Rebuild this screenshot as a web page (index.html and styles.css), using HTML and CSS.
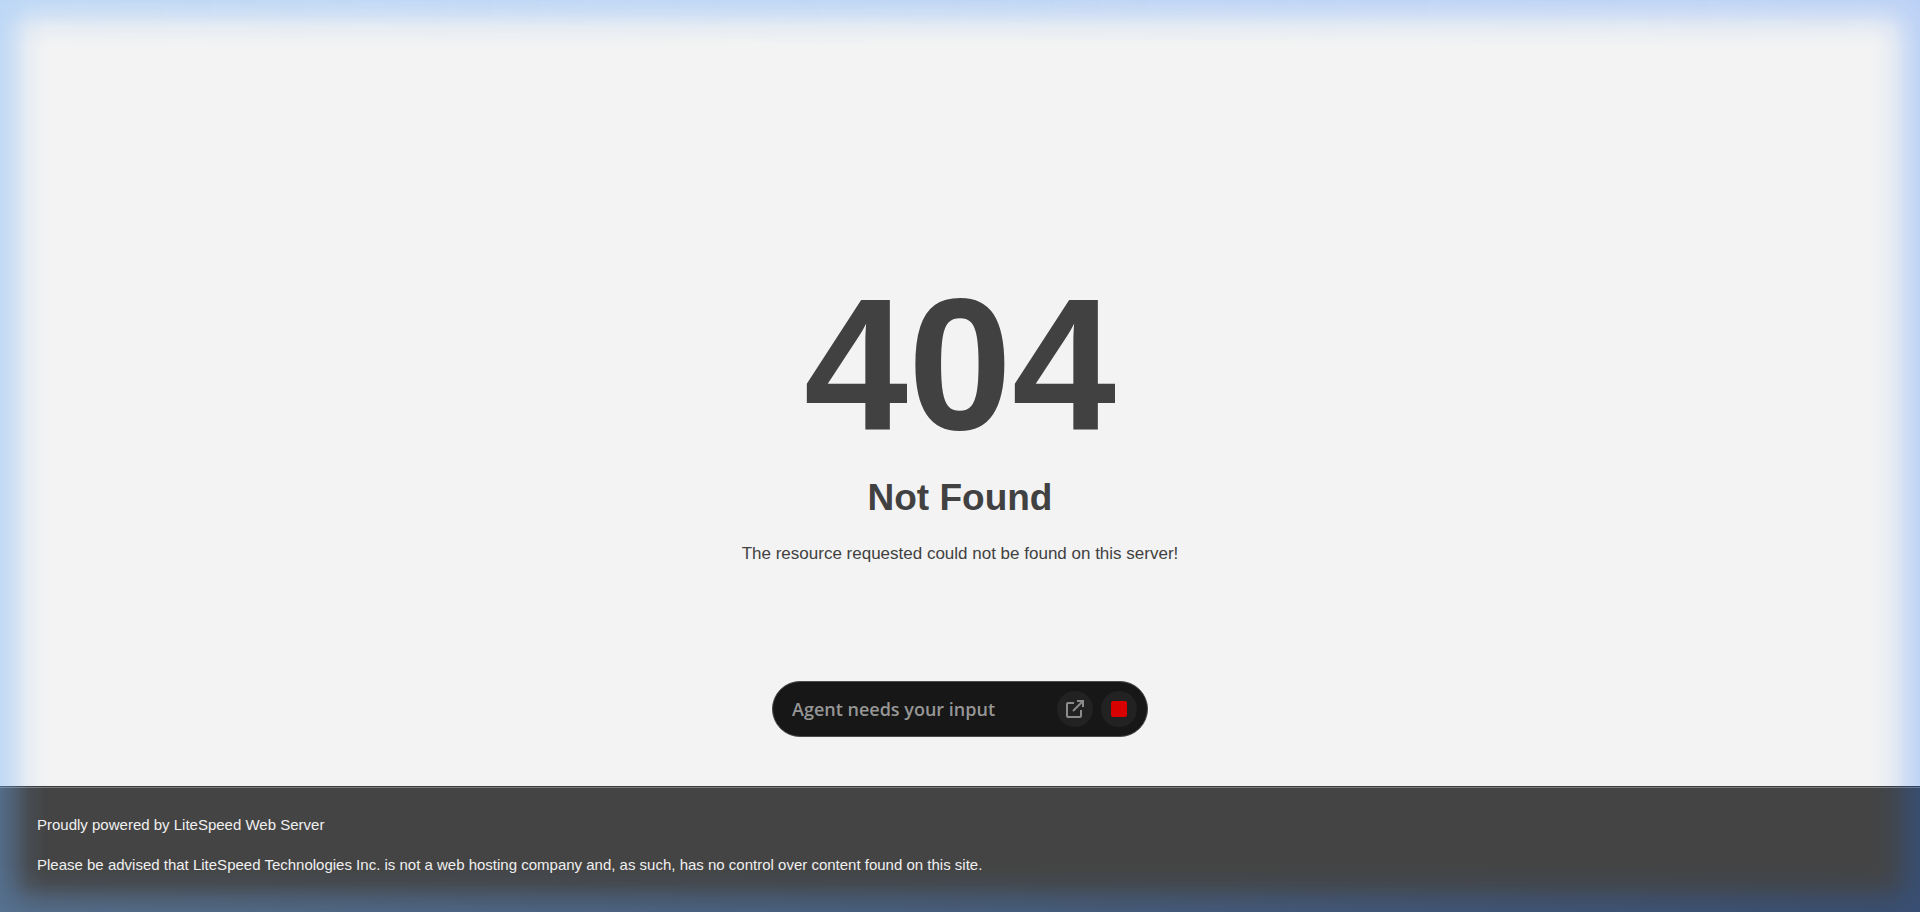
FILE: index.html
```html
<!DOCTYPE html>
<html lang="en">
<head>
  <meta charset="UTF-8">
  <title>404 Not Found</title>
  <meta name="viewport" content="width=device-width, initial-scale=1">
  <link rel="stylesheet" href="styles.css">
</head>
<body>

  <main class="content">
    <h1>404</h1>
    <h2>Not Found</h2>
    <p>The resource requested could not be found on this server!</p>
  </main>

  <footer class="footer">
    <p>Proudly powered by LiteSpeed Web Server</p>
    <p>Please be advised that LiteSpeed Technologies Inc. is not a web hosting company and, as such, has no control over content found on this site.</p>
  </footer>

  <div class="glow"></div>

  <div class="agent-bar">
    <span class="agent-text">Agent needs your input</span>
    <button type="button" class="agent-btn" aria-label="Open">
      <svg width="20" height="20" viewBox="0 0 20 20" fill="none" stroke="#8c8c8c" stroke-width="2">
        <path d="M9 4H3Q2 4 2 5V17Q2 18 3 18H15Q16 18 16 17V11"/>
        <path d="M8 12L18 2"/>
        <path d="M12 2H18V8"/>
      </svg>
    </button>
    <button type="button" class="agent-btn" aria-label="Stop">
      <span class="stop"></span>
    </button>
  </div>

</body>
</html>
```
FILE: styles.css
```css
body {
  margin: 0;
  min-height: 100vh;
  display: flex;
  flex-direction: column;
  font-family: Arial, "Liberation Sans", sans-serif;
  color: #414141;
  background: #f3f3f3;
}
.content {
  flex: 1;
  padding-top: 30vh;
  text-align: center;
}
h1 {
  margin: 0;
  font-size: 187px;
  line-height: 182px;
}
h2 {
  margin: 20px 0 0;
  font-size: 37px;
  line-height: 44px;
}
.content p {
  margin: 24px 0;
  font-size: 17px;
  line-height: 20px;
}
.footer {
  box-sizing: border-box;
  min-height: 126px;
  padding: 29px 37px;
  font-size: 15px;
  line-height: 18px;
  color: #f0f0f0;
  background: #444;
  border-top: 1px solid #3a3a3a;
  box-shadow: 0 1px 0 rgba(255,255,255,0.3) inset;
}
.footer p {
  margin: 0 0 22px;
}
.footer p:last-child {
  margin-bottom: 0;
}
/* blue glow round the edge of the window */
.glow {
  position: fixed;
  inset: 0;
  pointer-events: none;
  background: linear-gradient(to right, rgba(110,175,250,0.42), rgba(20,110,255,0.26));
  --fade: rgba(0,0,0,0.9) 0, rgba(0,0,0,0.62) 14px, rgba(0,0,0,0.2) 28px, transparent 46px;
  -webkit-mask-image: linear-gradient(to right, var(--fade)), linear-gradient(to left, var(--fade)), linear-gradient(to bottom, var(--fade)), linear-gradient(to top, var(--fade));
  mask-image: linear-gradient(to right, var(--fade)), linear-gradient(to left, var(--fade)), linear-gradient(to bottom, var(--fade)), linear-gradient(to top, var(--fade));
}
.agent-bar {
  position: fixed;
  left: 50%;
  bottom: 175px;
  transform: translateX(-50%);
  box-sizing: border-box;
  width: 376px;
  height: 56px;
  padding: 0 10px 0 19px;
  display: flex;
  align-items: center;
  gap: 8px;
  background: #171717;
  border: 1px solid #4a4a4a;
  border-radius: 28px;
}
.agent-text {
  flex: 1;
  font-family: "Segoe UI", "Open Sans", "Noto Sans", sans-serif;
  font-size: 18px;
  font-weight: 600;
  color: #969696;
  white-space: nowrap;
}
.agent-btn {
  width: 36px;
  height: 36px;
  padding: 0;
  display: flex;
  align-items: center;
  justify-content: center;
  background: #222;
  border: none;
  border-radius: 50%;
  cursor: pointer;
}
.stop {
  width: 16px;
  height: 16px;
  background: #d90000;
  border-radius: 2px;
}
```
